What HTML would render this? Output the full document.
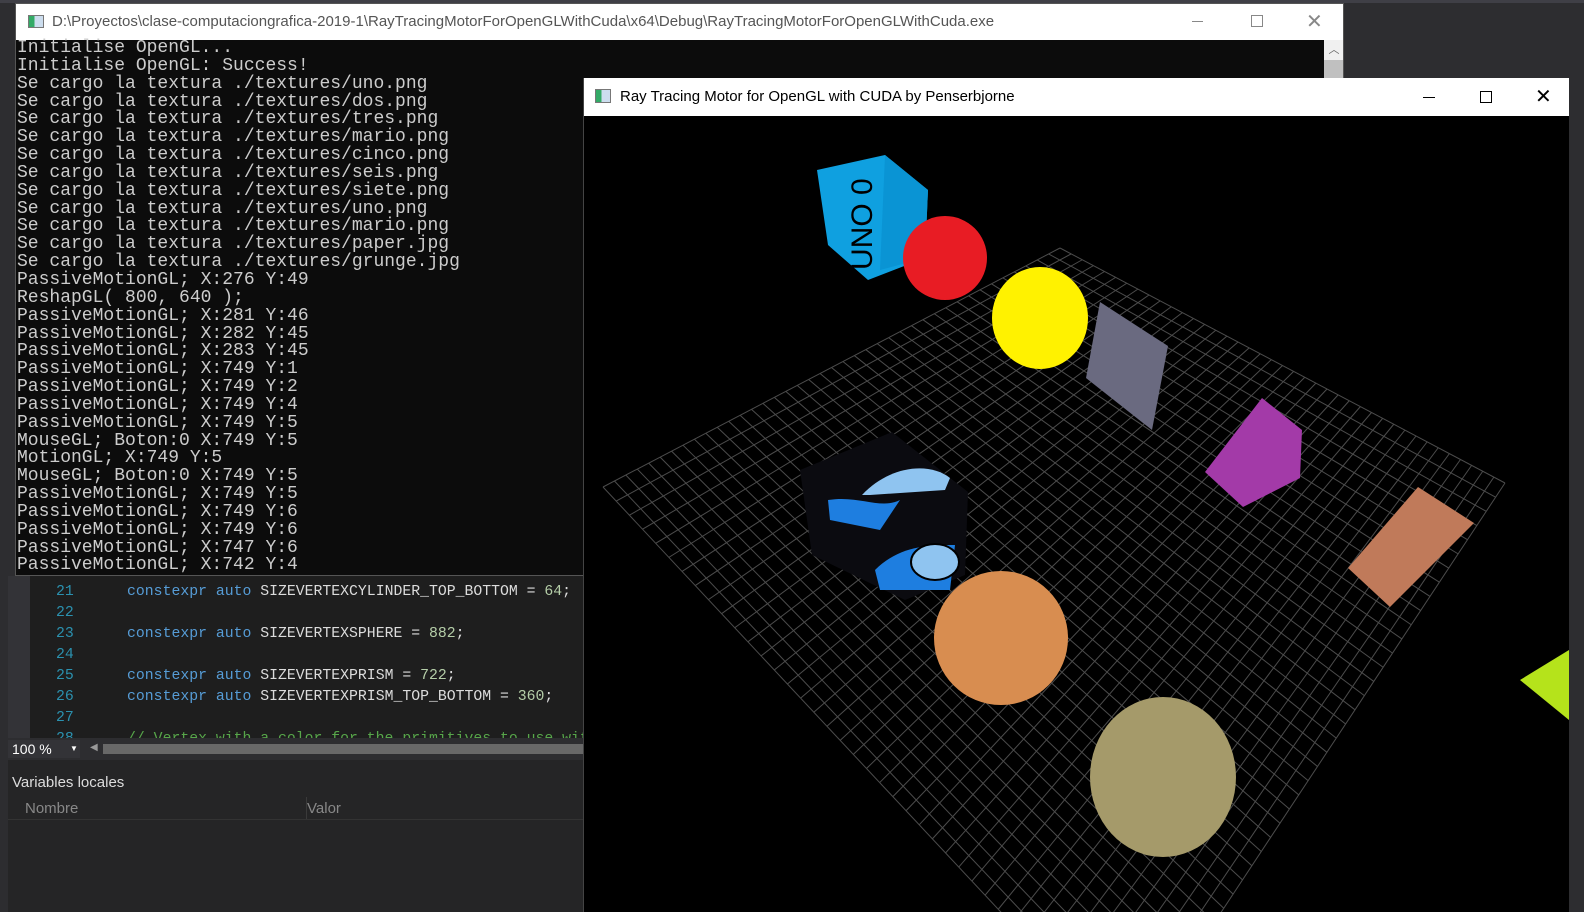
<!DOCTYPE html>
<html style="overflow:hidden"><head><meta charset="utf-8"><style>
*{margin:0;padding:0;box-sizing:border-box}
html,body{width:1584px;height:912px;overflow:hidden;margin:0}
body{background:#2d2d30;font-family:"Liberation Sans",sans-serif}
#wrap{position:relative;width:1584px;height:912px;overflow:hidden;background:#2d2d30}
.abs{position:absolute}
svg{display:block}
#con{left:15px;top:3px;width:1329px;height:573px;background:#0c0c0c;border:1px solid #555;overflow:hidden}
#conTitle{left:0;top:0;width:100%;height:36px;background:#fff;color:#555;font-size:15px;line-height:36px;padding-left:36px;white-space:nowrap;overflow:hidden}
#conText{left:1px;top:36px;font-family:"Liberation Mono",monospace;font-size:18px;line-height:17.85px;color:#ccc;white-space:pre}
#vs{left:8px;top:576px;width:576px;height:336px;background:#1e1e1e;overflow:hidden}
.code{font-family:"Liberation Mono",monospace;font-size:14.8px;color:#dcdcdc;white-space:pre;position:absolute}
.kw{color:#569cd6}.num{color:#b5cea8}.ln{color:#2b91af}
#gl{left:583px;top:78px;width:986px;height:834px;background:#000;border-left:1px solid #444;overflow:hidden}
#glTitle{left:0;top:0;width:100%;height:38px;background:#fff;color:#000;font-size:15px;line-height:38px;padding-left:36px;overflow:hidden}
</style></head><body><div id="wrap">
<div class="abs" style="left:0;top:0;width:1584px;height:3px;background:#3f3f46"></div>
<div class="abs" id="con">
 <div class="abs" id="conTitle">D:\Proyectos\clase-computaciongrafica-2019-1\RayTracingMotorForOpenGLWithCuda\x64\Debug\RayTracingMotorForOpenGLWithCuda.exe
  <div class="abs" style="left:12px;top:11px;width:16px;height:13px;border:1px solid #777;background:linear-gradient(90deg,#3a6 0 40%,#cde 40%)"></div>
  <div class="abs" style="left:1176px;top:17px;width:11px;height:1px;background:#888"></div>
  <div class="abs" style="left:1235px;top:11px;width:12px;height:12px;border:1px solid #888"></div>
  <div class="abs" style="left:1290px;top:0;color:#888;font-size:20px">✕</div>
 </div>
 <div class="abs" style="left:1308px;top:36px;width:20px;height:38px;background:#f0f0f0"><div style="text-align:center;color:#666;font-size:11px;line-height:20px">︿</div><div style="height:18px;background:#c0c0c0"></div></div>
 <div class="abs" id="conText">Initialise OpenGL...
Initialise OpenGL: Success!
Se cargo la textura ./textures/uno.png
Se cargo la textura ./textures/dos.png
Se cargo la textura ./textures/tres.png
Se cargo la textura ./textures/mario.png
Se cargo la textura ./textures/cinco.png
Se cargo la textura ./textures/seis.png
Se cargo la textura ./textures/siete.png
Se cargo la textura ./textures/uno.png
Se cargo la textura ./textures/mario.png
Se cargo la textura ./textures/paper.jpg
Se cargo la textura ./textures/grunge.jpg
PassiveMotionGL; X:276 Y:49
ReshapGL( 800, 640 );
PassiveMotionGL; X:281 Y:46
PassiveMotionGL; X:282 Y:45
PassiveMotionGL; X:283 Y:45
PassiveMotionGL; X:749 Y:1
PassiveMotionGL; X:749 Y:2
PassiveMotionGL; X:749 Y:4
PassiveMotionGL; X:749 Y:5
MouseGL; Boton:0 X:749 Y:5
MotionGL; X:749 Y:5
MouseGL; Boton:0 X:749 Y:5
PassiveMotionGL; X:749 Y:5
PassiveMotionGL; X:749 Y:6
PassiveMotionGL; X:749 Y:6
PassiveMotionGL; X:747 Y:6
PassiveMotionGL; X:742 Y:4</div>
</div>
<div class="abs" id="vs">
 <div class="abs" style="left:0;top:0;width:22px;height:164px;background:#333337"></div>
 <div class="code" style="left:48px;top:6px;line-height:21px"><span class="ln">21</span>      <span class="kw">constexpr auto</span> SIZEVERTEXCYLINDER_TOP_BOTTOM = <span class="num">64</span>;
<span class="ln">22</span>
<span class="ln">23</span>      <span class="kw">constexpr auto</span> SIZEVERTEXSPHERE = <span class="num">882</span>;
<span class="ln">24</span>
<span class="ln">25</span>      <span class="kw">constexpr auto</span> SIZEVERTEXPRISM = <span class="num">722</span>;
<span class="ln">26</span>      <span class="kw">constexpr auto</span> SIZEVERTEXPRISM_TOP_BOTTOM = <span class="num">360</span>;
<span class="ln">27</span>
<span class="ln">28</span>      <span style="color:#57a64a">// Vertex with a color for the primitives to use wit</span></div>
 <div class="abs" style="left:0;top:162px;width:576px;height:22px;background:#2d2d30"></div>
 <div class="abs" style="left:0;top:164px;width:72px;height:18px;background:#333337;color:#fff;font-size:14px;line-height:18px;padding-left:4px">100 %<span style="position:absolute;left:62px;font-size:8px">▼</span></div>
 <div class="abs" style="left:82px;top:166px;color:#999;font-size:10px">◀</div>
 <div class="abs" style="left:95px;top:168px;width:481px;height:10px;background:#686868"></div>
 <div class="abs" style="left:0;top:184px;width:576px;height:152px;background:#252526"></div>
 <div class="abs" style="left:4px;top:198px;color:#ddd;font-size:15px">Variables locales</div>
 <div class="abs" style="left:0;top:220px;width:576px;height:24px;background:#252526;border-bottom:1px solid #333"></div>
 <div class="abs" style="left:17px;top:224px;color:#888;font-size:15px">Nombre</div>
 <div class="abs" style="left:298px;top:221px;width:1px;height:22px;background:#3a3a3a"></div>
 <div class="abs" style="left:299px;top:224px;color:#888;font-size:15px">Valor</div>
</div>
<div class="abs" id="gl">
 <div class="abs" id="glTitle">Ray Tracing Motor for OpenGL with CUDA by Penserbjorne
  <div class="abs" style="left:11px;top:11px;width:16px;height:14px;border:1px solid #777;background:linear-gradient(90deg,#3a6 0 40%,#cde 40%)"></div>
  <div class="abs" style="left:839px;top:19px;width:12px;height:1px;background:#000"></div>
  <div class="abs" style="left:896px;top:13px;width:12px;height:12px;border:1px solid #000"></div>
  <div class="abs" style="left:951px;top:0;font-size:20px">✕</div>
 </div>
</div>
<svg class="abs" style="left:0;top:0;overflow:hidden" width="1584" height="912" id="sc">
 <defs><clipPath id="c"><rect x="584" y="116" width="985" height="796"/></clipPath></defs>
 <g clip-path="url(#c)" id="scene">
  <g id="grid" stroke="#4c4c4c" stroke-width="1"></g>
  <polygon points="817,170 885,155 928,190 925,258 868,280 828,245" fill="#0fa0e0"/>
  <polygon points="885,155 928,190 925,258 880,270" fill="#0a94d4"/>
  <text x="0" y="0" transform="translate(872,270) rotate(-90)" font-size="30" font-family="Liberation Sans,sans-serif" fill="#000">UNO 0</text>
  <circle cx="945" cy="258" r="42" fill="#e81c24"/>
  <ellipse cx="1040" cy="318" rx="48" ry="51" fill="#fff200"/>
  <polygon points="1100,302 1168,346 1152,430 1086,378" fill="#6a6a80"/>
  <polygon points="1262,398 1302,430 1300,478 1243,507 1205,472" fill="#a33aa8"/>
  <polygon points="1418,487 1474,523 1390,607 1348,568" fill="#c07a5a"/>
  <polygon points="800,470 892,432 968,492 965,575 905,600 812,555" fill="#0b0b10"/>
  <path d="M862,495 C890,465 930,462 950,478 L945,490 L870,495Z" fill="#8fc4f0"/>
  <path d="M828,500 C860,495 880,510 900,500 L880,530 L830,520Z" fill="#1e7ee0"/>
  <path d="M875,570 C900,545 930,545 955,545 L950,590 L880,590Z" fill="#1e7ee0"/>
  <ellipse cx="935" cy="562" rx="24" ry="18" fill="#8fc4f0" stroke="#000" stroke-width="2"/>
  <circle cx="1001" cy="638" r="67" fill="#d88d50"/>
  <ellipse cx="1163" cy="777" rx="73" ry="80" fill="#a59a6a"/>
  <polygon points="1569,650 1520,680 1569,720" fill="#b5e31b"/>
 </g>
</svg>
</div>
<script>
var g=document.getElementById('grid'),N=40;
var L=[603,487],T=[1060,248],R=[1505,483],B=[1130,1050];
function lerp(a,b,t){return [a[0]+(b[0]-a[0])*t,a[1]+(b[1]-a[1])*t]}
var s='';
for(var i=0;i<=N;i++){var t=i/N;
 var a=lerp(L,T,t),b=lerp(B,R,t);s+='<line x1="'+a[0]+'" y1="'+a[1]+'" x2="'+b[0]+'" y2="'+b[1]+'"/>';
 a=lerp(L,B,t);b=lerp(T,R,t);s+='<line x1="'+a[0]+'" y1="'+a[1]+'" x2="'+b[0]+'" y2="'+b[1]+'"/>';}
g.innerHTML=s;
</script>
</body></html>
